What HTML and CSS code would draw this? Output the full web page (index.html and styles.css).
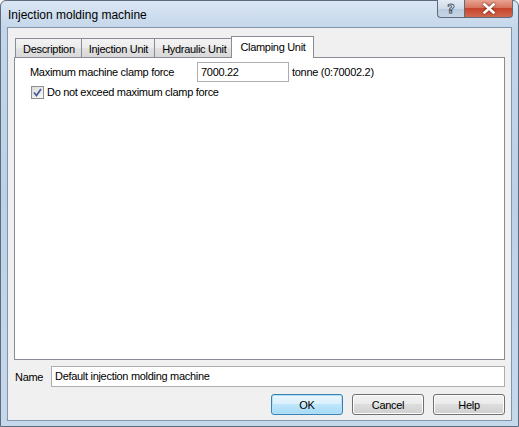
FILE: index.html
```html
<!DOCTYPE html>
<html>
<head>
<meta charset="utf-8">
<link rel="stylesheet" href="styles.css">
</head>
<body>
<div class="window">
  <div class="titlebar">
    <div class="title">Injection molding machine</div>
    <div class="caption-btns">
      <div class="cbtn help-btn"><span>?</span></div>
      <div class="cbtn close-btn">
        <svg width="14" height="11" viewBox="0 0 14 11"><path d="M2.5 1.5 L11.5 9.5 M11.5 1.5 L2.5 9.5" stroke="#fff" stroke-width="2.6" stroke-linecap="square" fill="none"/></svg>
      </div>
    </div>
  </div>
  <div class="client">
    <div class="tabs">
      <div class="tab">Description</div>
      <div class="tab">Injection Unit</div>
      <div class="tab">Hydraulic Unit</div>
      <div class="tab active">Clamping Unit</div>
    </div>
    <div class="panel">
      <div class="row">
        <span class="lbl">Maximum machine clamp force</span>
        <div class="input small">7000.22</div>
        <span class="unit">tonne (0:70002.2)</span>
      </div>
      <div class="row check-row">
        <span class="checkbox">
          <svg width="9" height="9" viewBox="0 0 9 9"><path d="M1 4.5 L3.5 7.5 L8 1" stroke="#4a5f97" stroke-width="1.8" fill="none"/></svg>
        </span>
        <span class="lbl">Do not exceed maximum clamp force</span>
      </div>
    </div>
    <div class="name-row">
      <span class="lbl">Name</span>
      <div class="input wide">Default injection molding machine</div>
    </div>
    <div class="buttons">
      <div class="btn default">OK</div>
      <div class="btn">Cancel</div>
      <div class="btn">Help</div>
    </div>
  </div>
</div>
</body>
</html>
```
FILE: styles.css
```css
html, body {
  margin: 0;
  padding: 0;
}
body {
  width: 519px;
  height: 427px;
  overflow: hidden;
  font-family: "Liberation Sans", Arial, sans-serif;
  font-size: 11px;
  letter-spacing: -0.3px;
  color: #000;
}
.window {
  width: 519px;
  height: 427px;
  box-sizing: border-box;
  background: linear-gradient(180deg, #dae6f3 0px, #c2d5ea 30px, #bcd1e8 200px, #c6d8ec 427px);
  border: 1px solid #5c6b7e;
  border-radius: 6px 6px 0 0;
  display: flex;
  flex-direction: column;
  padding: 0 6px 5px 6px;
}
.titlebar {
  height: 26px;
  display: flex;
  align-items: flex-start;
  justify-content: space-between;
  flex: none;
}
.title {
  font-size: 12px;
  letter-spacing: 0;
  padding-top: 7px;
  padding-left: 1px;
  color: #000;
}
.caption-btns {
  display: flex;
  margin-top: -1px;
  margin-right: -1px;
}
.cbtn {
  height: 18px;
  box-sizing: border-box;
  border: 1px solid #5e6b7a;
  border-top: none;
  display: flex;
  align-items: center;
  justify-content: center;
}
.help-btn {
  width: 27px;
  border-radius: 0 0 0 4px;
  border-right: none;
  background: linear-gradient(180deg, #e3ebf4 0%, #cfdbe8 50%, #b9cade 51%, #c6d6e7 100%);
}
.help-btn span {
  font-family: "DejaVu Sans", sans-serif;
  font-weight: bold;
  font-size: 13px;
  line-height: 14px;
  color: #eef3f8;
  -webkit-text-stroke: 0.9px #485466;
  letter-spacing: 0;
}
.close-btn {
  width: 49px;
  border-radius: 0 0 4px 0;
  background: linear-gradient(180deg, #e8a493 0%, #d7745f 45%, #c7432b 50%, #d2694f 100%);
}
.close-btn svg {
  filter: drop-shadow(0 0 1px #5a160c);
}
.client {
  flex: 1;
  background: #f0f0f0;
  border: 1px solid #8195ab;
  display: flex;
  flex-direction: column;
  padding: 8px 6px 5px 6px;
}
.tabs {
  display: flex;
  height: 21px;
  align-items: flex-end;
  padding-left: 1px;
  flex: none;
}
.tab {
  height: 19px;
  box-sizing: border-box;
  border: 1px solid #898c95;
  border-bottom: none;
  border-left: none;
  background: linear-gradient(180deg, #f3f3f3 0%, #ebebeb 50%, #e2e2e2 51%, #d8d8d8 100%);
  padding: 3px 6px 0 7px;
  line-height: 14px;
  white-space: nowrap;
}
.tab:first-child {
  border-left: 1px solid #898c95;
}
.tab.active {
  background: #fff;
  border-left: 1px solid #898c95;
  margin-left: -2px;
  margin-bottom: -1px;
  padding: 3px 7px 0 8px;
  position: relative;
  z-index: 1;
  height: 22px;
}
.panel {
  flex: 1;
  background: #fff;
  border: 1px solid #898c95;
  padding: 3px 0 0 15px;
}
.row {
  display: flex;
  align-items: center;
  height: 21px;
}
.row .lbl {
  width: 167px;
}
.input {
  box-sizing: border-box;
  height: 20px;
  border: 1px solid #abadb3;
  background: #fff;
  padding: 3px 0 0 3px;
  line-height: 13px;
}
.input.small {
  width: 92px;
}
.unit {
  margin-left: 3px;
}
.check-row {
  margin-top: 2px;
  height: 16px;
}
.check-row .lbl {
  width: auto;
}
.checkbox {
  width: 13px;
  height: 13px;
  box-sizing: border-box;
  border: 1px solid #8e8f8f;
  background: linear-gradient(135deg, #dcdcdc, #f8f8f8);
  display: flex;
  align-items: center;
  justify-content: center;
  margin-left: 1px;
  margin-right: 3px;
}
.name-row {
  display: flex;
  align-items: center;
  margin-top: 6px;
  height: 21px;
  flex: none;
}
.name-row .lbl {
  width: 36px;
  padding-left: 1px;
}
.input.wide {
  flex: 1;
  height: 21px;
}
.buttons {
  display: flex;
  justify-content: flex-end;
  gap: 9px;
  margin-top: 7px;
  flex: none;
}
.btn {
  width: 72px;
  height: 21px;
  box-sizing: border-box;
  border: 1px solid #707070;
  border-radius: 3px;
  background: linear-gradient(180deg, #f2f2f2 0%, #ebebeb 48%, #dddddd 50%, #cfcfcf 100%);
  display: flex;
  align-items: center;
  justify-content: center;
  box-shadow: inset 0 0 0 1px #fcfcfc;
}
.btn.default {
  border-color: #3c7fb1;
  background: linear-gradient(180deg, #eaf6fd 0%, #d9f0fc 48%, #bee6fd 50%, #a7d9f5 100%);
  box-shadow: inset 0 0 0 1px #b2e2f9;
}
```
